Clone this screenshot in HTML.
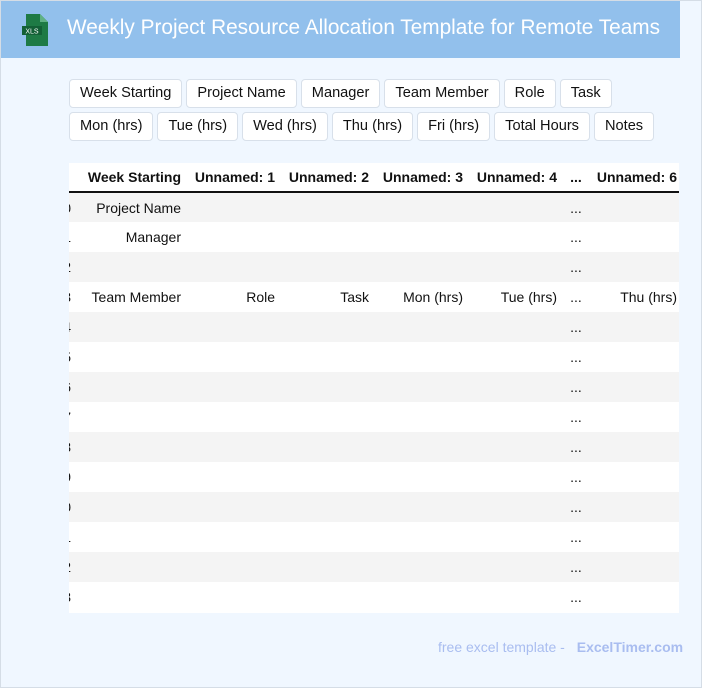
<!DOCTYPE html>
<html><head><meta charset="utf-8"><style>
*{box-sizing:border-box;margin:0;padding:0}
body{width:702px;height:688px;background:#f0f7ff;font-family:"Liberation Sans",sans-serif;position:relative;overflow:hidden;border:1px solid #d5dde6}
.hdr{position:absolute;left:0;top:0;width:679px;height:57px;background:#92c0ec}
.hdr .t{position:absolute;left:66px;top:15px;color:#fff;font-size:20.8px;white-space:nowrap}
.ico{position:absolute;left:21px;top:13px}
.chips{position:absolute;left:68px;top:78px;width:600px;display:flex;flex-wrap:wrap;gap:4px}
.chip{height:29px;line-height:27px;padding:0 10px;background:#fff;border:1px solid #d8e0ea;border-radius:4px;font-size:14.6px;color:#111}
.tw{position:absolute;left:68px;top:162px;width:610px;height:450px;overflow:hidden;background:#fff}
table{position:absolute;left:-18px;top:0;width:630px;border-collapse:collapse;font-size:14px;color:#111;table-layout:fixed}
td,th{height:30px;padding:0 4px;text-align:right;white-space:nowrap;overflow:hidden}
th{font-weight:bold;border-bottom:2px solid #111;height:29px}
tr:nth-child(odd) td{background:#f4f4f4}
tbody tr:nth-child(even) td{background:#fff}
.c{text-align:center}
.ft{position:absolute;left:437px;top:638px;font-size:14px;color:#a9bdf0}
.ft b{margin-left:8px}
</style></head><body>
<div class="hdr">
<svg class="ico" width="28" height="32" viewBox="0 0 28 32"><path d="M4 0h14l8 8v24H4z" fill="#1e7a45"/><path d="M18 0l8 8h-8z" fill="#5fb184"/><rect x="0" y="12" width="20" height="9" fill="#136036"/><text x="10" y="19.5" font-size="7" fill="#fff" text-anchor="middle" font-family="Liberation Sans">XLS</text></svg>
<div class="t">Weekly Project Resource Allocation Template for Remote Teams</div>
</div>
<div class="chips">
<span class="chip">Week Starting</span><span class="chip">Project Name</span><span class="chip">Manager</span><span class="chip">Team Member</span><span class="chip">Role</span><span class="chip">Task</span>
<span class="chip">Mon (hrs)</span><span class="chip">Tue (hrs)</span><span class="chip">Wed (hrs)</span><span class="chip">Thu (hrs)</span><span class="chip">Fri (hrs)</span><span class="chip">Total Hours</span><span class="chip">Notes</span>
</div>
<div class="tw"><table>
<colgroup><col style="width:24px"><col style="width:110px"><col style="width:94px"><col style="width:94px"><col style="width:94px"><col style="width:94px"><col style="width:30px"><col style="width:90px"></colgroup>
<thead><tr style="background:#fff"><th></th><th>Week Starting</th><th>Unnamed: 1</th><th>Unnamed: 2</th><th>Unnamed: 3</th><th>Unnamed: 4</th><th class="c">...</th><th>Unnamed: 6</th></tr></thead>
<tbody>
<tr><td>0</td><td>Project Name</td><td></td><td></td><td></td><td></td><td class="c">...</td><td></td></tr>
<tr><td>1</td><td>Manager</td><td></td><td></td><td></td><td></td><td class="c">...</td><td></td></tr>
<tr><td>2</td><td></td><td></td><td></td><td></td><td></td><td class="c">...</td><td></td></tr>
<tr><td>3</td><td>Team Member</td><td>Role</td><td>Task</td><td>Mon (hrs)</td><td>Tue (hrs)</td><td class="c">...</td><td>Thu (hrs)</td></tr>
<tr><td>4</td><td></td><td></td><td></td><td></td><td></td><td class="c">...</td><td></td></tr>
<tr><td>5</td><td></td><td></td><td></td><td></td><td></td><td class="c">...</td><td></td></tr>
<tr><td>6</td><td></td><td></td><td></td><td></td><td></td><td class="c">...</td><td></td></tr>
<tr><td>7</td><td></td><td></td><td></td><td></td><td></td><td class="c">...</td><td></td></tr>
<tr><td>8</td><td></td><td></td><td></td><td></td><td></td><td class="c">...</td><td></td></tr>
<tr><td>9</td><td></td><td></td><td></td><td></td><td></td><td class="c">...</td><td></td></tr>
<tr><td>10</td><td></td><td></td><td></td><td></td><td></td><td class="c">...</td><td></td></tr>
<tr><td>11</td><td></td><td></td><td></td><td></td><td></td><td class="c">...</td><td></td></tr>
<tr><td>12</td><td></td><td></td><td></td><td></td><td></td><td class="c">...</td><td></td></tr>
<tr><td>13</td><td></td><td></td><td></td><td></td><td></td><td class="c">...</td><td></td></tr>
</tbody></table></div>
<div class="ft">free excel template - <b>ExcelTimer.com</b></div>
</body></html>
